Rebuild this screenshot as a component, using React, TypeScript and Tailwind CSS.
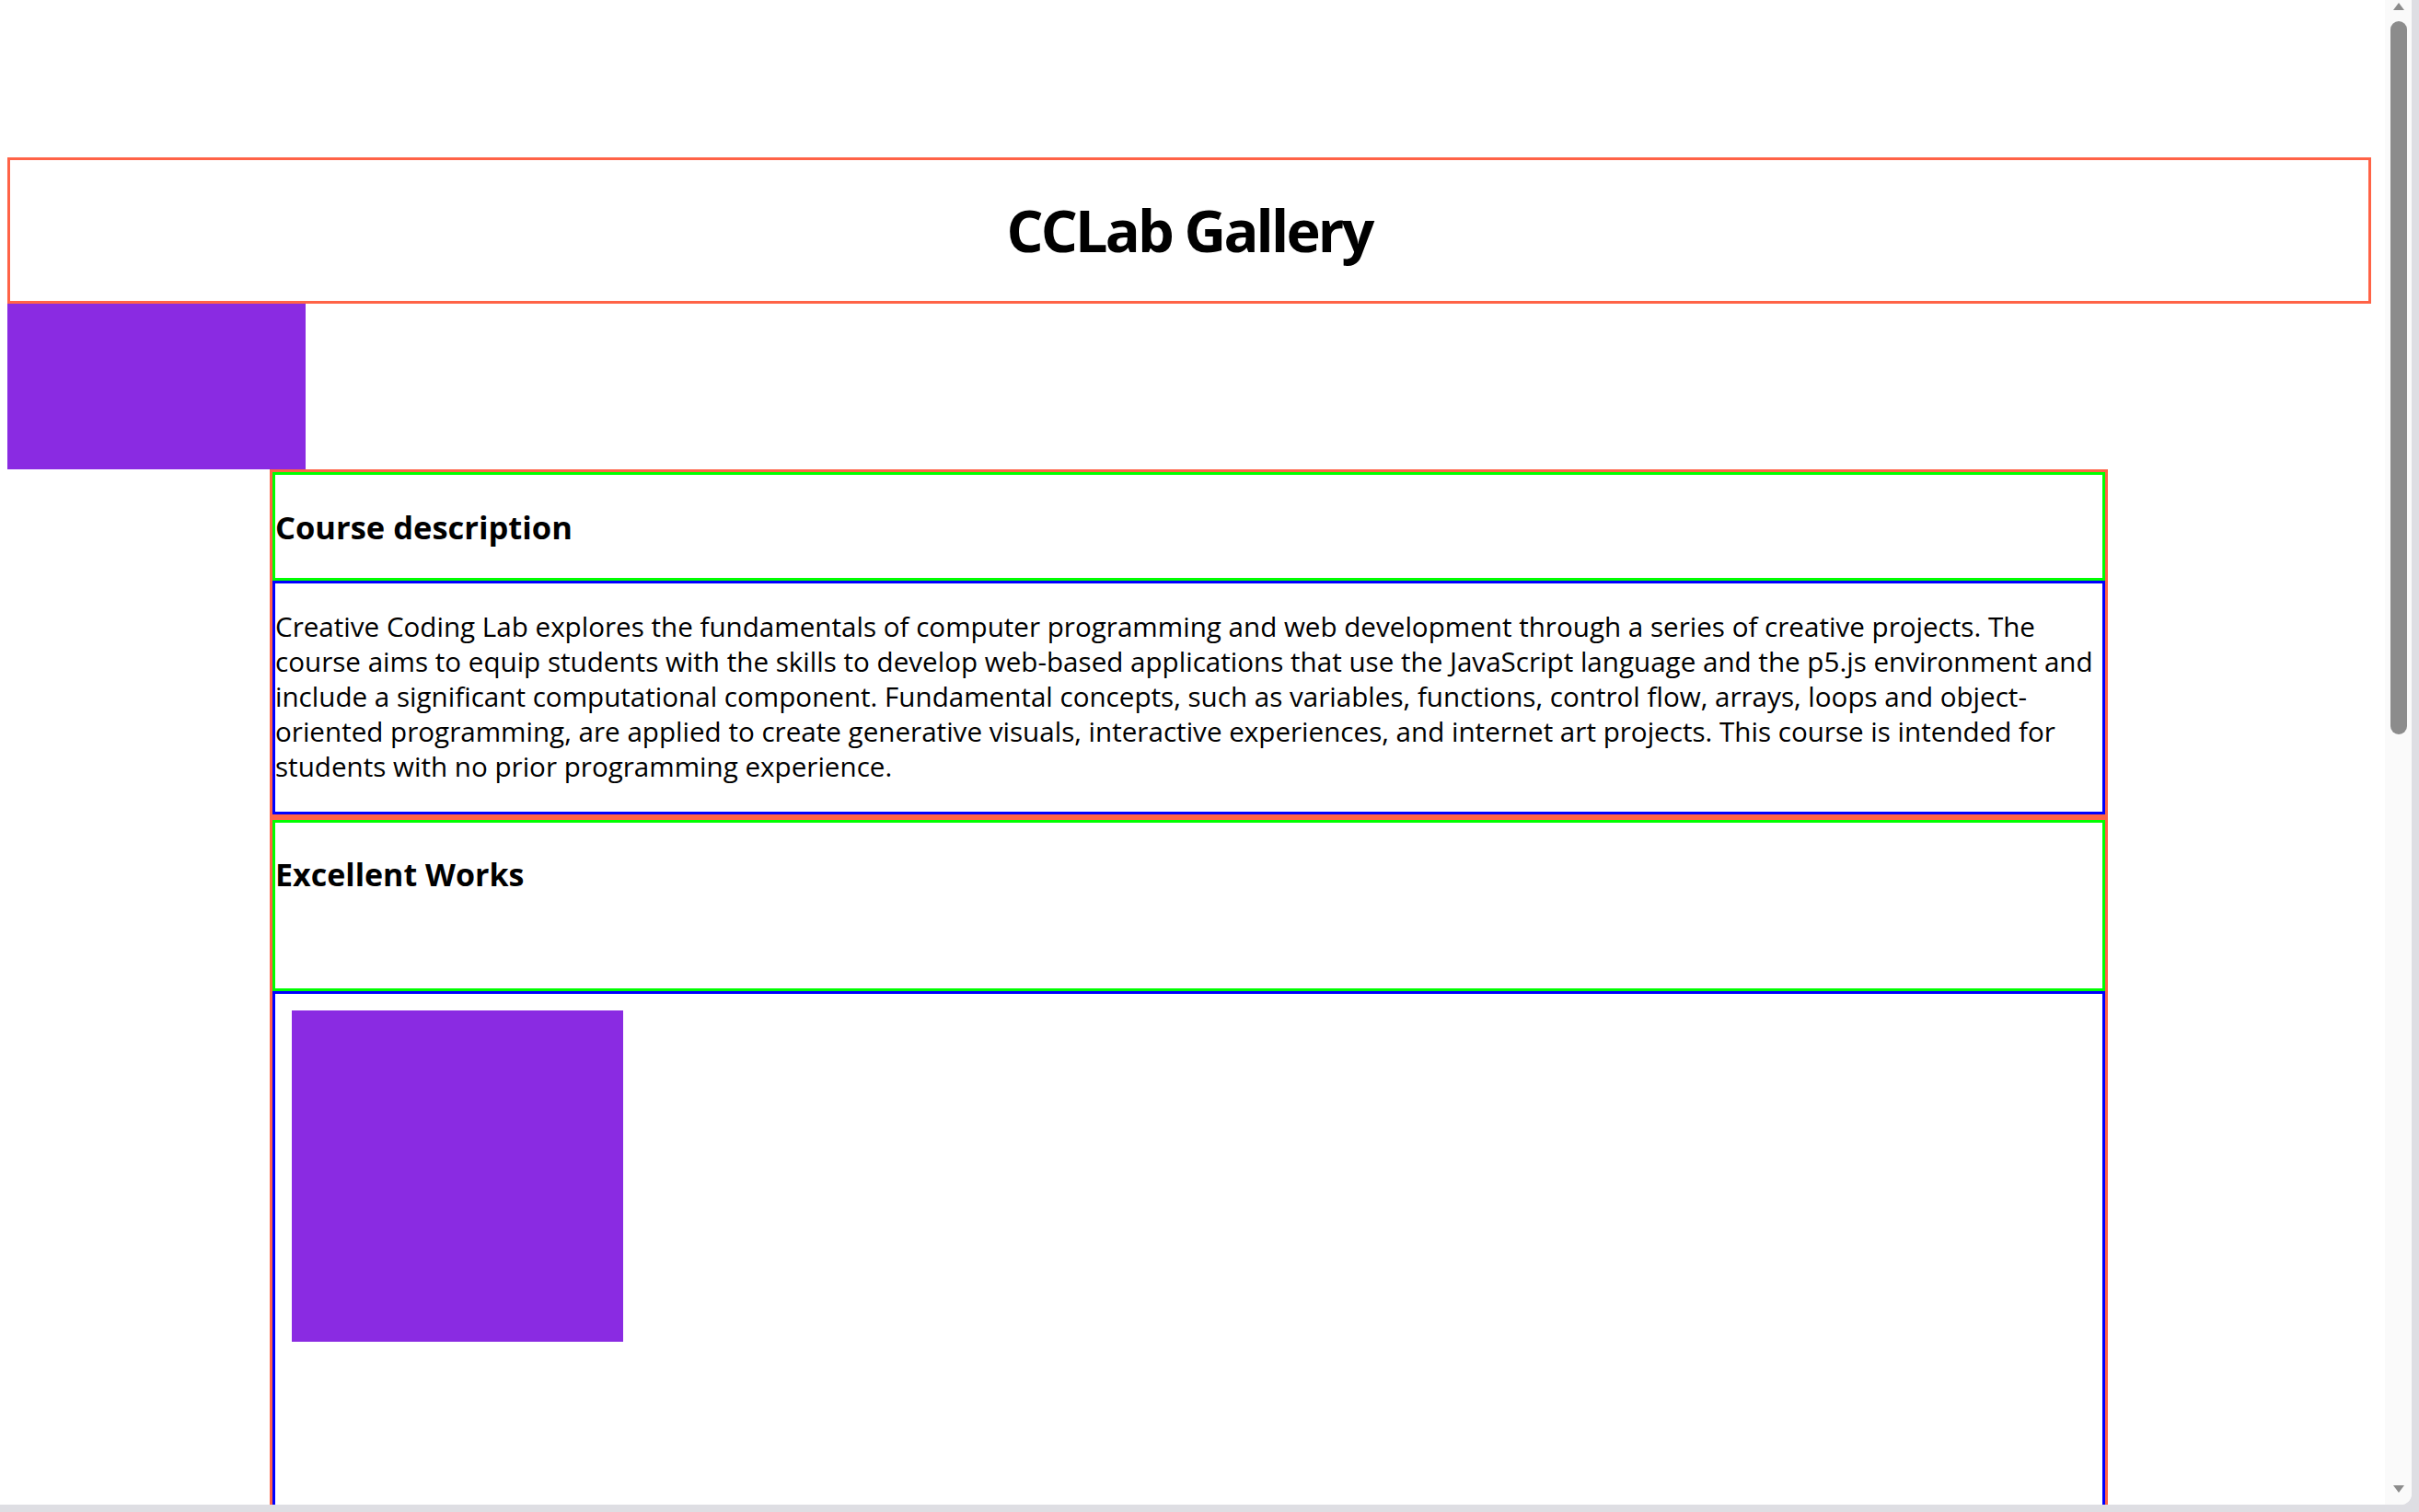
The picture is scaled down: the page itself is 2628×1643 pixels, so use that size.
const body = [
  "Creative Coding Lab explores the fundamentals of computer programming and web development through a series of creative projects. The",
  "course aims to equip students with the skills to develop web-based applications that use the JavaScript language and the p5.js environment and",
  "include a significant computational component. Fundamental concepts, such as variables, functions, control flow, arrays, loops and object-",
  "oriented programming, are applied to create generative visuals, interactive experiences, and internet art projects. This course is intended for",
  "students with no prior programming experience.",
];

const works = [{ id: "work-1" }];

function Scrollbar() {
  return (
    <div className="flex w-[29px] flex-col items-center bg-[#fafafa]">
      <svg width="14" height="10" viewBox="0 0 14 10" className="mt-[2px]">
        <polygon points="7,1 13,9 1,9" fill="#8c8c8c" />
      </svg>
      <div className="mt-[11px] h-[775px] w-[18px] rounded-full bg-[#8c8c8c]" />
      <div className="flex-1" />
      <svg width="14" height="10" viewBox="0 0 14 10" className="mb-[12px]">
        <polygon points="1,1 13,1 7,9" fill="#8c8c8c" />
      </svg>
    </div>
  );
}

export default function App() {
  return (
    <div className="h-screen w-screen overflow-hidden bg-[#dedee3] font-['Open_Sans',sans-serif] text-black">
      <div className="flex h-[1635px] w-[2620px] overflow-hidden rounded-br-[12px] bg-white">
        <main className="w-[2591px] shrink-0 overflow-hidden pt-[171px]">
          <header className="ml-[8px] h-[159px] w-[2568px] border-[3px] border-[#ff6347] pt-[44px] text-center">
            <h1 className="text-[63px] font-bold leading-[64px] tracking-[-0.045em]">CCLab Gallery</h1>
          </header>
          <div className="ml-[8px] h-[180px] w-[324px] bg-[#8a2be2]" />

          <div className="ml-[293px] w-[1997px]">
            <section className="border-[3px] border-[#ff6347]">
              <div className="h-[118px] border-[3px] border-[#00ff00] pt-[40px]">
                <h3 className="text-[34.5px] font-bold leading-[34.5px]">Course description</h3>
              </div>
              <div className="h-[254px] border-[3px] border-[#0000ff] pt-[28px]">
                <p className="text-[29.6px] leading-[38px] whitespace-nowrap">
                  {body.map((line, i) => (
                    <span key={i} className="block">
                      {line}
                    </span>
                  ))}
                </p>
              </div>
            </section>

            <section className="border-[3px] border-[#ff6347]">
              <div className="h-[186px] border-[3px] border-[#00ff00] pt-[39px]">
                <h3 className="text-[34px] font-bold leading-[34.5px]">Excellent Works</h3>
              </div>
              <div className="flex min-h-[800px] flex-wrap items-start gap-[18px] border-[3px] border-[#0000ff] p-[18px]">
                {works.map((w) => (
                  <div key={w.id} className="h-[360px] w-[360px] bg-[#8a2be2]" />
                ))}
              </div>
            </section>
          </div>
        </main>
        <Scrollbar />
      </div>
    </div>
  );
}
